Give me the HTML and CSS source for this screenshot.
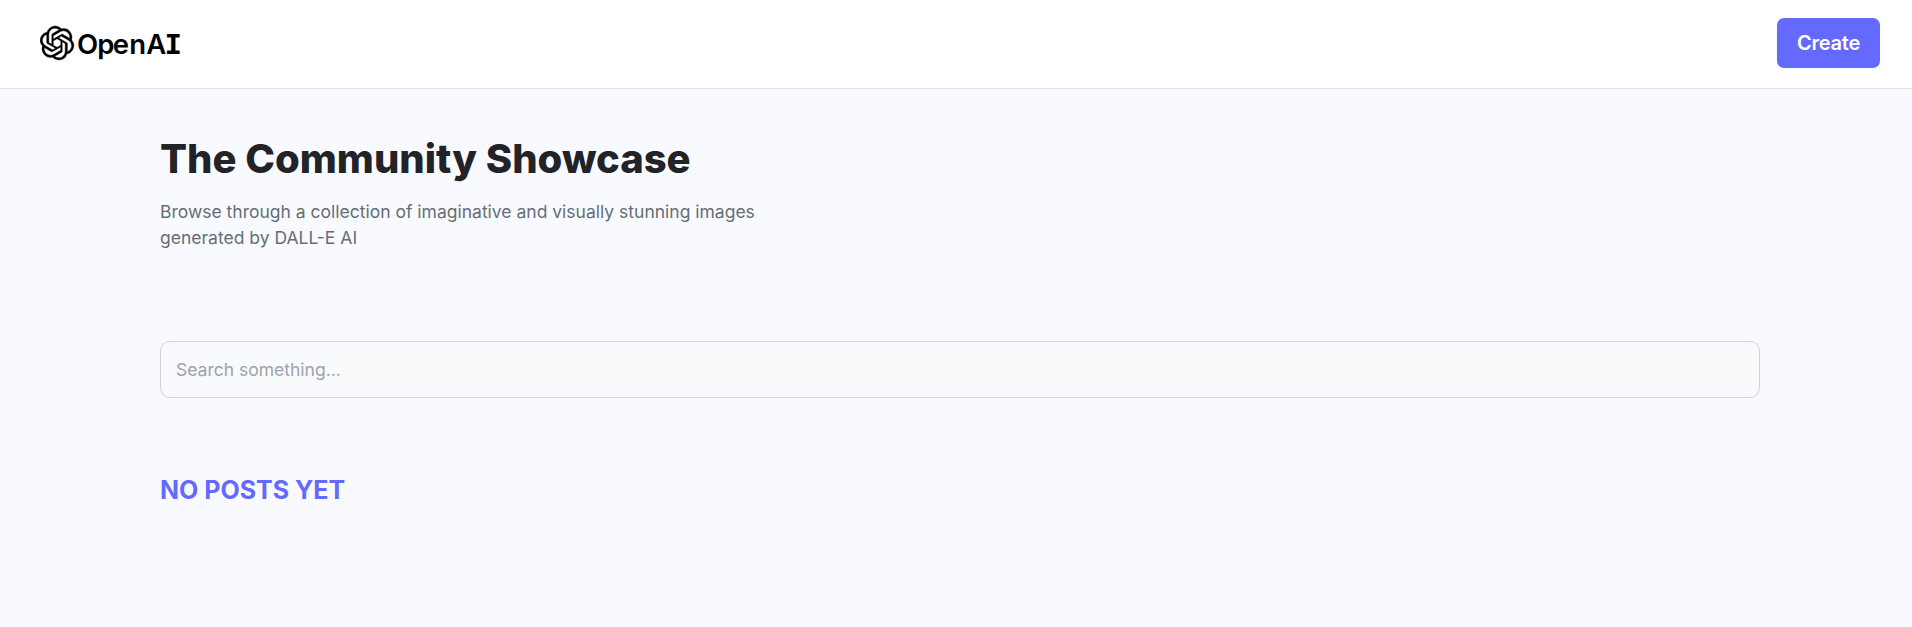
FILE: index.html
```html
<!DOCTYPE html>
<html lang="en">
<head>
<meta charset="utf-8">
<title>The Community Showcase</title>
<link rel="stylesheet" href="styles.css">
</head>
<body>
<header class="header">
  <a class="logo" aria-label="OpenAI">
    <svg width="142" height="36" viewBox="0 0 142 36">
      <g transform="translate(0 1) scale(1.417)">
        <path stroke="#000" stroke-width=".25" d="M22.2819 9.8211a5.9847 5.9847 0 0 0-.5157-4.9108 6.0462 6.0462 0 0 0-6.5098-2.9A6.0651 6.0651 0 0 0 4.9807 4.1818a5.9847 5.9847 0 0 0-3.9977 2.9 6.0462 6.0462 0 0 0 .7427 7.0966 5.98 5.98 0 0 0 .511 4.9107 6.051 6.051 0 0 0 6.5146 2.9001A5.9847 5.9847 0 0 0 13.2599 24a6.0557 6.0557 0 0 0 5.7718-4.2058 5.9894 5.9894 0 0 0 3.9977-2.9001 6.0557 6.0557 0 0 0-.7475-7.073zm-9.022 12.6081a4.4755 4.4755 0 0 1-2.8764-1.0408l.1419-.0804 4.7783-2.7582a.7948.7948 0 0 0 .3927-.6813v-6.7369l2.02 1.1686a.071.071 0 0 1 .038.052v5.5826a4.504 4.504 0 0 1-4.4945 4.4944zm-9.6607-4.1254a4.4708 4.4708 0 0 1-.5346-3.0137l.142.0852 4.783 2.7582a.7712.7712 0 0 0 .7806 0l5.8428-3.3685v2.3324a.0804.0804 0 0 1-.0332.0615L9.74 19.9502a4.4992 4.4992 0 0 1-6.1408-1.6464zM2.3408 7.8956a4.485 4.485 0 0 1 2.3655-1.9728V11.6a.7664.7664 0 0 0 .3879.6765l5.8144 3.3543-2.0201 1.1685a.0757.0757 0 0 1-.071 0l-4.8303-2.7865A4.504 4.504 0 0 1 2.3408 7.872zm16.5963 3.8558L13.1038 8.364 15.1192 7.2a.0757.0757 0 0 1 .071 0l4.8303 2.7913a4.4944 4.4944 0 0 1-.6765 8.1042v-5.6772a.79.79 0 0 0-.407-.667zm2.0107-3.0231l-.142-.0852-4.7735-2.7818a.7759.7759 0 0 0-.7854 0L9.409 9.2297V6.8974a.0662.0662 0 0 1 .0284-.0615l4.8303-2.7866a4.4992 4.4992 0 0 1 6.6802 4.66zM8.3065 12.863l-2.02-1.1638a.0804.0804 0 0 1-.038-.0567V6.0742a4.4992 4.4992 0 0 1 7.3757-3.4537l-.142.0805L8.704 5.459a.7948.7948 0 0 0-.3927.6813zm1.0976-2.3654l2.602-1.4998 2.6069 1.4998v2.9994l-2.5974 1.4997-2.6067-1.4997Z"/>
      </g>
      <text class="logo-text" x="37 57.3 72.8 89.3 106.3" y="29">OpenA</text>
      <text class="logo-serif" transform="translate(124.6 29) scale(1.1 1)">I</text>
    </svg>
  </a>
  <a class="create">Create</a>
</header>
<main class="main">
  <h1 class="title">The Community Showcase</h1>
  <p class="lead">Browse through a collection of imaginative and visually stunning images generated by DALL-E AI</p>
  <input class="search" type="text" placeholder="Search something...">
  <h2 class="empty">No posts yet</h2>
</main>
</body>
</html>
```

FILE: styles.css
```css
* { box-sizing: border-box; }
body {
  margin: 0;
  min-height: 100vh;
  background: #f9faff;
  font-family: Inter, sans-serif;
}
.header {
  display: flex;
  justify-content: space-between;
  align-items: flex-start;
  height: 89px;
  padding: 18px 32px 0 40px;
  background: #fff;
  border-bottom: 1px solid #e2e4ea;
}
.logo { display: block; padding-top: 7px; }
.logo svg { display: block; }
.logo-text {
  font: 600 27.5px Inter, sans-serif;
}
.logo-serif {
  font: 700 26.5px "DejaVu Sans Mono", monospace;
}
.create {
  width: 103px;
  height: 50px;
  border-radius: 7px;
  background: #6469ff;
  color: #fff;
  font-size: 20px;
  font-weight: 600;
  letter-spacing: -0.25px;
  line-height: 50px;
  text-align: center;
}
.main {
  width: 1600px;
  margin-left: 160px;
  padding-top: 44.5px;
}
.title {
  margin: 0;
  color: #222328;
  font-size: 40px;
  font-weight: 800;
  line-height: 50px;
}
.lead {
  width: 610px;
  margin: 15.5px 0 0;
  color: #666e75;
  font-size: 17.5px;
  line-height: 26.25px;
}
.search {
  display: block;
  width: 100%;
  height: 57px;
  margin-top: 89.5px;
  padding: 0 15px;
  border: 1px solid #d1d5db;
  border-radius: 10px;
  background: #f9fafb;
  font: 17.5px Inter, sans-serif;
}
.search::placeholder { color: #9ca3af; }
.empty {
  margin: 74px 0 0;
  color: #6469ff;
  font-size: 25px;
  font-weight: 700;
  line-height: 36px;
  text-transform: uppercase;
}
```
